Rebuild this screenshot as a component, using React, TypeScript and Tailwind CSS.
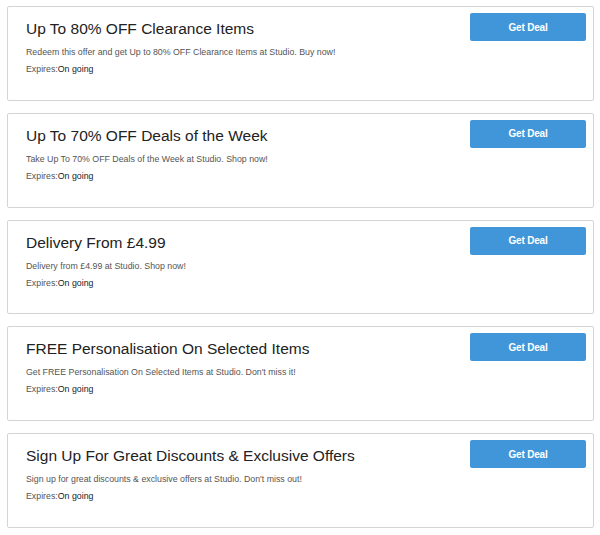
import React from "react";

const deals = [
  {
    title: "Up To 80% OFF Clearance Items",
    desc: "Redeem this offer and get Up to 80% OFF Clearance Items at Studio. Buy now!",
  },
  {
    title: "Up To 70% OFF Deals of the Week",
    desc: "Take Up To 70% OFF Deals of the Week at Studio. Shop now!",
  },
  {
    title: "Delivery From £4.99",
    desc: "Delivery from £4.99 at Studio. Shop now!",
  },
  {
    title: "FREE Personalisation On Selected Items",
    desc: "Get FREE Personalisation On Selected Items at Studio. Don't miss it!",
  },
  {
    title: "Sign Up For Great Discounts & Exclusive Offers",
    desc: "Sign up for great discounts & exclusive offers at Studio. Don't miss out!",
  },
];

export default function App() {
  return (
    <div
      className="w-[600px] h-[535px] bg-white pt-[6px] pl-[7px] pr-[6px] flex flex-col gap-[12px]"
      style={{ fontFamily: '"Liberation Sans", Arial, sans-serif' }}
    >
      {deals.map((d, i) => (
        <div
          key={i}
          className="h-[94.75px] border border-[#d4d4d4] rounded-[2px] flex justify-between pl-[18px] pr-[7px] pt-[6px]"
        >
          <div className="flex flex-col">
            <div className="text-[15.5px] leading-[20px] text-[#222] mt-[6px]">{d.title}</div>
            <div className="text-[8.8px] leading-[12px] text-[#555] mt-[7px]">{d.desc}</div>
            <div className="text-[8.8px] leading-[12px] text-[#555] mt-[5px]">
              Expires:<span className="text-[#222]">On going</span>
            </div>
          </div>
          <button className="w-[116px] h-[28px] bg-[#4196d9] rounded-[2px] text-white text-[10px] font-bold tracking-[-0.2px] shrink-0">
            Get Deal
          </button>
        </div>
      ))}
    </div>
  );
}
